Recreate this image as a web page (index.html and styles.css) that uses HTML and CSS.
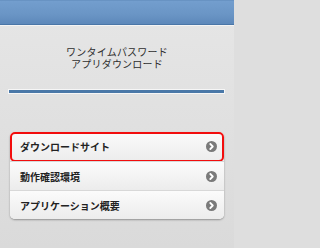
FILE: index.html
```html
<!DOCTYPE html>
<html lang="ja">
<head>
<meta charset="utf-8">
<link rel="stylesheet" href="styles.css">
</head>
<body>
<div class="header"></div>
<div class="hl"></div>
<div class="title">
  <div class="tline">ワンタイムパスワード</div>
  <div class="tline">アプリダウンロード</div>
</div>
<div class="bar"></div>
<ul class="menu">
  <li class="item active"><span>ダウンロードサイト</span><span class="arr"><svg viewBox="0 0 11 11" width="11" height="11"><circle cx="5.5" cy="5.5" r="5.5" fill="#7a7a7a"/><path d="M4.3 3 L6.8 5.5 L4.3 8" fill="none" stroke="#fff" stroke-width="1.8" stroke-linecap="round" stroke-linejoin="round"/></svg></span></li>
  <li class="item"><span>動作確認環境</span><span class="arr"><svg viewBox="0 0 11 11" width="11" height="11"><circle cx="5.5" cy="5.5" r="5.5" fill="#7a7a7a"/><path d="M4.3 3 L6.8 5.5 L4.3 8" fill="none" stroke="#fff" stroke-width="1.8" stroke-linecap="round" stroke-linejoin="round"/></svg></span></li>
  <li class="item"><span>アプリケーション概要</span><span class="arr"><svg viewBox="0 0 11 11" width="11" height="11"><circle cx="5.5" cy="5.5" r="5.5" fill="#7a7a7a"/><path d="M4.3 3 L6.8 5.5 L4.3 8" fill="none" stroke="#fff" stroke-width="1.8" stroke-linecap="round" stroke-linejoin="round"/></svg></span></li>
</ul>
</body>
</html>
```

FILE: styles.css
```css
html, body {
  margin: 0;
  padding: 0;
}
html {
  background: #dedede;
}
body {
  width: 234px;
  height: 248px;
  overflow: hidden;
  background: linear-gradient(#e6e6e6, #dadada);
  font-family: "Noto Sans CJK JP", "Noto Sans", sans-serif;
}
.header {
  height: 24px;
  background: linear-gradient(#5d88b8 0, #739ece 1px, #6a95c5 60%, #5d88ba 100%);
  border-bottom: 1px solid #4a76a7;
}
.hl {
  height: 1px;
  background: #f4f4f4;
}
.title {
  margin-top: 21px;
  text-align: center;
  font-family: "Liberation Sans", "Noto Sans CJK JP", sans-serif;
  font-size: 10px;
  color: #2e2e2e;
  letter-spacing: 0.2px;
}
.tline {
  height: 12px;
  line-height: 12px;
}
.bar {
  margin: 19px 10px 0 9px;
  height: 3px;
  background: #4a78a8;
  box-shadow: 0 0 0 1px rgba(255,255,255,0.7);
}
.menu {
  list-style: none;
  margin: 39px 10px 0 10px;
  padding: 0;
  background: linear-gradient(#ffffff, #f0f0f0);
  border-radius: 5px;
  box-shadow: 0 1px 2px rgba(0,0,0,0.35);
}
.item {
  position: relative;
  display: flex;
  align-items: center;
  justify-content: space-between;
  height: 28px;
  padding: 0 7px 0 10px;
  font-size: 10px;
  font-weight: bold;
  color: #222;
  background: linear-gradient(#fbfbfb, #ececec);
  border-top: 1px solid #d8d8d8;
}
.item:first-child {
  border-top: none;
  border-radius: 5px 5px 0 0;
  height: 29px;
}
.item:last-child {
  border-radius: 0 0 5px 5px;
}
.item.active::after {
  content: "";
  position: absolute;
  left: 0;
  top: 0;
  right: 0;
  bottom: -1px;
  border: 2px solid #f20d0d;
  border-radius: 5px;
}
.arr {
  display: flex;
}
```
